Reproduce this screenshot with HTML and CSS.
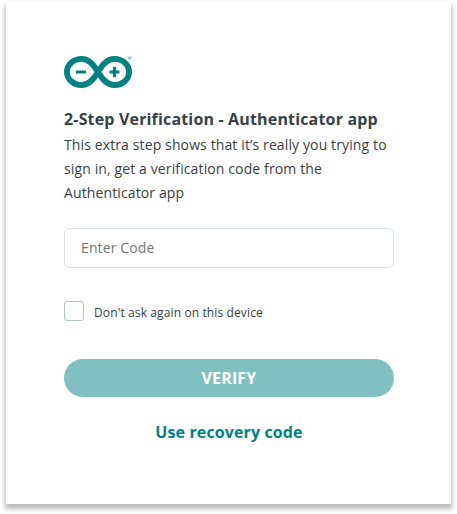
FILE: index.html
```html
<!DOCTYPE html>
<html lang="en">
<head>
<meta charset="utf-8">
<title>2-Step Verification</title>
<link rel="stylesheet" href="styles.css">
</head>
<body>
<main class="card">
  <svg class="logo" width="70" height="34" viewBox="0 0 70 34" role="img" aria-label="Arduino">
    <g fill="none" stroke="#008184">
      <path stroke-width="5.800" d="M34 17C29.500 9.500 25 3.900 17.500 3.900C9.500 3.900 2.900 9.700 2.900 17S9.500 30.100 17.500 30.100C25 30.100 29.500 24.500 34 17C38.500 9.500 43 3.900 50.500 3.900C58.500 3.900 65.100 9.700 65.100 17S58.500 30.100 50.500 30.100C43 30.100 38.500 24.500 34 17Z"/>
      <path stroke-width="3.200" d="M12 17H22M45.500 17H55.500M50.500 12V22"/>
      <g stroke="#5fadb0">
        <circle cx="65.800" cy="3" r="1.400" stroke-width=".6"/>
        <path stroke-width=".5" d="M65.400 3.800V2.300H66.200V3H65.400M65.800 3L66.300 3.800"/>
      </g>
    </g>
  </svg>
  <h1 class="title">2-Step Verification - Authenticator app</h1>
  <p class="description">This extra step shows that it’s really you trying to sign in, get a verification code from the Authenticator app</p>
  <input class="code" type="text" placeholder="Enter Code" aria-label="Enter Code">
  <label class="remember"><input class="checkbox" type="checkbox"><span class="remember-text">Don't ask again on this device</span></label>
  <button class="verify" type="button">VERIFY</button>
  <a class="recovery" href="#">Use recovery code</a>
</main>
</body>
</html>
```
FILE: styles.css
```css
* { box-sizing: border-box; }
body { margin: 0; height: 514px; padding: 2px 6px 10px; overflow: hidden; background: #fff; font-family: "Open Sans", sans-serif; color: #374146; }
.card { display: flex; flex-direction: column; width: 445px; height: 502px; padding: 53px 57px 0 58px; background: #fff; box-shadow: 0 4px 5px 1px #b9b9b9; }
.logo { display: block; flex: none; }
.title { margin: 18px 0 2px; font-size: 16px; line-height: 24px; font-weight: 700; letter-spacing: .165px; white-space: nowrap; }
.description { margin: 0; font-size: 14px; line-height: 24px; letter-spacing: .12px; }
.code { width: 330px; height: 40px; margin: 23px 0 0; padding: 0 16px 2px; border: 1px solid #dae3e3; border-radius: 6px; font: 14px "Open Sans", sans-serif; letter-spacing: .12px; }
.code::placeholder { color: #757575; }
.remember { display: flex; align-items: center; gap: 10px; margin-top: 33px; height: 20px; font-size: 12px; letter-spacing: .12px; }
.remember-text { padding-top: 2px; }
.checkbox { appearance: none; width: 20px; height: 20px; margin: 0; border: 1px solid #b5c4c4; border-radius: 3px; }
.verify { height: 38px; margin-top: 38px; border: 0; border-radius: 19px; background: #80c0c1; color: #fff; font: 700 16px/24px "Open Sans", sans-serif; letter-spacing: .15px; }
.recovery { margin-top: 23px; align-self: center; color: #008184; font-size: 16px; line-height: 24px; font-weight: 700; letter-spacing: .12px; text-decoration: none; }
```
